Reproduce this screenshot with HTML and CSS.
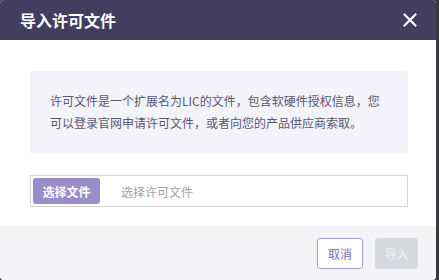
FILE: index.html
```html
<!DOCTYPE html>
<html lang="zh-CN">
<head>
<meta charset="UTF-8">
<meta name="viewport" content="width=device-width, initial-scale=1.0">
<title>导入许可文件</title>
<link rel="stylesheet" href="styles.css">
</head>
<body>

<div class="dialog">
  <div class="dialog-header">
    <h2 class="dialog-title">导入许可文件</h2>
    <button class="close-button" aria-label="关闭">
      <svg width="14" height="14" viewBox="0 0 14 14">
        <path d="M1.5 1.5 L12.5 12.5 M12.5 1.5 L1.5 12.5" stroke="#fff" stroke-width="2.2" stroke-linecap="round"/>
      </svg>
    </button>
  </div>

  <div class="dialog-body">
    <div class="info-box">
      许可文件是一个扩展名为LIC的文件，包含软硬件授权信息，您可以登录官网申请许可文件，或者向您的产品供应商索取。
    </div>

    <div class="file-input">
      <button class="file-button">选择文件</button>
      <span class="file-placeholder">选择许可文件</span>
    </div>
  </div>

  <div class="dialog-footer">
    <button class="btn btn-cancel">取消</button>
    <button class="btn btn-import" disabled>导入</button>
  </div>
</div>

</body>
</html>
```

FILE: styles.css
```css
body {
  margin: 0;
  padding: 0;
  background-color: #3a3a3c;
  font-family: "Noto Sans CJK SC", "Noto Sans", sans-serif;
  overflow: hidden;
}

.dialog {
  width: 436px;
  height: 280px;
  background-color: #fff;
  border-radius: 4px;
  overflow: hidden;
  display: flex;
  flex-direction: column;
}

.dialog-header {
  height: 40px;
  background-color: #433d60;
  display: flex;
  align-items: center;
  justify-content: space-between;
  padding: 0 19px 0 20px;
}

.dialog-title {
  margin: 0;
  font-size: 16px;
  font-weight: 700;
  color: #fff;
  line-height: 40px;
}

.close-button {
  border: none;
  background: none;
  padding: 0;
  width: 14px;
  height: 14px;
  display: flex;
  cursor: pointer;
}

.dialog-body {
  flex: 1;
  padding: 31px 28px 0 30px;
}

.info-box {
  background-color: #f4f3f9;
  border-radius: 4px;
  padding: 19px 20px 20px;
  font-size: 12px;
  line-height: 22px;
  color: #5b5672;
}

.file-input {
  margin-top: 21px;
  height: 30px;
  border: 1px solid #d4d4d6;
  display: flex;
  align-items: center;
  padding: 0 2px;
}

.file-button {
  height: 26px;
  width: 67px;
  border: none;
  border-radius: 3px;
  background-color: #9a8dcb;
  color: #fff;
  font-family: inherit;
  font-size: 12px;
  font-weight: 700;
  padding: 0;
  cursor: pointer;
}

.file-placeholder {
  margin-left: 21px;
  font-size: 12px;
  color: #a3a3a8;
}

.dialog-footer {
  height: 54px;
  box-sizing: border-box;
  background-color: #f4f4f6;
  display: flex;
  justify-content: flex-end;
  align-items: flex-start;
  gap: 12px;
  padding: 12px 18px 0 0;
}

.btn {
  height: 31px;
  border-radius: 3px;
  font-family: inherit;
  font-size: 12px;
  padding: 0;
  cursor: pointer;
}

.btn-cancel {
  width: 46px;
  border: 1px solid #aa9ed8;
  background-color: #fff;
  color: #7b6db5;
}

.btn-import {
  width: 43px;
  border: none;
  background-color: #d6d9de;
  color: #f3f4f6;
  cursor: default;
}
```
